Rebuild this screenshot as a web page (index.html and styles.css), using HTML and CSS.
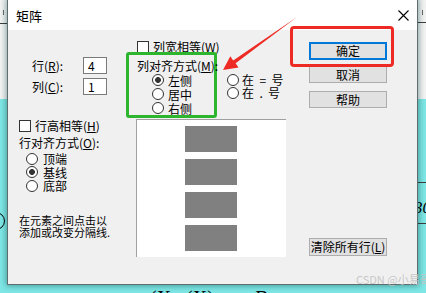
FILE: index.html
```html
<!DOCTYPE html>
<html lang="zh">
<head>
    <meta charset="UTF-8">
    <title>矩阵</title>
    <link rel="stylesheet" href="styles.css">
</head>
<body>
<div class="desktop">
    <!-- bits of the document behind the dialog -->
    <span class="rule rule-left"></span>
    <span class="tick tick-left"></span>
    <span class="tick tick-right"></span>
    <span class="rule rule-right-top"></span>
    <span class="rule rule-right-a"></span>
    <span class="rule rule-right-b"></span>
    <span class="behind-digits">30</span>
    <span class="behind-paren"></span>
    <span class="behind-formula">(X . (X) &#8801;&nbsp;&nbsp;&nbsp;&nbsp; &#914;</span>

    <div class="dialog">
        <div class="titlebar">
            <span class="title">矩阵</span>
            <svg class="close" width="11" height="11" viewBox="0 0 11 11">
                <path d="M0.5 0.5 L10.5 10.5 M10.5 0.5 L0.5 10.5" stroke="#000" stroke-width="1.1" fill="none"/>
            </svg>
        </div>

        <div class="client">
            <div class="col-left">
                <div class="fields">
                    <div class="field-row">
                        <label>行(<u>R</u>):</label>
                        <span class="num-box">4</span>
                    </div>
                    <div class="field-row">
                        <label>列(<u>C</u>):</label>
                        <span class="num-box">1</span>
                    </div>
                </div>

                <div class="check-row row-equal">
                    <span class="checkbox"></span>
                    <span>行高相等(<u>H</u>)</span>
                </div>

                <div class="group-label">行对齐方式(<u>O</u>):</div>
                <div class="radio-list row-align">
                    <div class="radio-row"><span class="radio"></span>顶端</div>
                    <div class="radio-row"><span class="radio checked"></span>基线</div>
                    <div class="radio-row"><span class="radio"></span>底部</div>
                </div>

                <p class="hint">在元素之间点击以<br>添加或改变分隔线.</p>
            </div>

            <div class="col-mid">
                <div class="check-row col-equal">
                    <span class="checkbox"></span>
                    <span>列宽相等(<u>W</u>)</span>
                </div>

                <div class="align-row">
                    <div class="col-align">
                        <div class="group-title">列对齐方式(<u>M</u>):</div>
                        <div class="radio-list">
                            <div class="radio-row tall"><span class="radio checked"></span>左侧</div>
                            <div class="radio-row tall"><span class="radio"></span>居中</div>
                            <div class="radio-row tall"><span class="radio"></span>右侧</div>
                        </div>
                    </div>
                    <div class="sign-radios">
                        <div class="radio-row sign"><span class="radio"></span>在&nbsp; =&nbsp; 号</div>
                        <div class="radio-row sign"><span class="radio"></span>在&nbsp; .&nbsp; 号</div>
                    </div>
                </div>

                <div class="preview">
                    <div class="cell"></div>
                    <div class="cell"></div>
                    <div class="cell"></div>
                    <div class="cell"></div>
                </div>
            </div>

            <div class="col-right">
                <button class="btn btn-default">确定</button>
                <button class="btn btn-cancel">取消</button>
                <button class="btn btn-help">帮助</button>
                <button class="btn btn-clear">清除所有行(<u>L</u>)</button>
            </div>
        </div>
    </div>

    <!-- red annotation drawn on top of the screenshot -->
    <div class="callout"></div>
    <svg class="arrow" width="426" height="293" viewBox="0 0 426 293">
        <polygon points="297,17 235.6,63.3 238.5,67.6 223,70 230.3,56.2 233.2,60.5" fill="#ee2a24"/>
    </svg>

    <div class="watermark">CSDN @小易哥</div>
</div>
</body>
</html>
```

FILE: styles.css
```css
* {
    box-sizing: border-box;
}
body {
    margin: 0;
    font-family: "Noto Sans CJK SC", "Liberation Sans", sans-serif;
    font-size: 12px;
    color: #000;
}
.desktop {
    position: relative;
    width: 426px;
    height: 293px;
    overflow: hidden;
    background: linear-gradient(to bottom, #f3f3f3 0, #f3f3f3 99px, #7ee7e6 99px);
}

/* things behind the dialog */
.rule {
    position: absolute;
    height: 1px;
    background: #3c3c3c;
}
.rule-left { left: 0; top: 23px; width: 7px; }
.rule-right-top { left: 418px; top: 22px; width: 8px; }
.rule-right-a { left: 418px; top: 182px; width: 8px; }
.rule-right-b { left: 418px; top: 223px; width: 8px; }
.tick {
    position: absolute;
    width: 1px;
    height: 5px;
    background: #666;
}
.tick-left { left: 3px; top: 10px; }
.tick-right { left: 422px; top: 10px; }
.behind-digits {
    position: absolute;
    left: 414px;
    top: 198px;
    font-family: "Liberation Serif", serif;
    font-style: italic;
    font-size: 17px;
    line-height: 20px;
}
.behind-paren {
    position: absolute;
    left: -13px;
    top: 212px;
    width: 18px;
    height: 18px;
    border: 1px solid #000;
    border-radius: 50%;
}
.behind-formula {
    position: absolute;
    left: 150px;
    top: 288px;
    font-family: "Liberation Serif", serif;
    font-size: 20px;
    line-height: 20px;
    white-space: nowrap;
}

/* dialog window */
.dialog {
    position: absolute;
    left: 7px;
    top: -1px;
    width: 411px;
    height: 286px;
    border: 1px solid #5e6e6e;
    background: #f0f0f0;
    box-shadow: 0 0 6px 1px rgba(0, 60, 60, 0.45);
    z-index: 1;
}
.titlebar {
    height: 30px;
    background: #fff;
    display: flex;
    align-items: center;
    padding: 0 8px 0 8px;
}
.title {
    font-size: 13px;
}
.close {
    margin-left: auto;
}
.client {
    height: 254px;
    display: grid;
    grid-template-columns: 118px 175px 1fr;
}

/* left column */
.col-left {
    padding: 27px 0 0 11px;
}
.fields {
    display: flex;
    flex-direction: column;
    gap: 4px;
}
.field-row {
    display: flex;
    align-items: center;
    height: 17px;
    line-height: 15px;
    padding-left: 13px;
}
.field-row label {
    width: 51px;
}
.num-box {
    width: 24px;
    height: 17px;
    border: 1px solid #7a7a7a;
    background: #fff;
    padding-left: 4px;
    line-height: 15px;
}
.check-row {
    display: flex;
    align-items: center;
    gap: 4px;
    height: 12px;
    line-height: 12px;
    white-space: nowrap;
}
.row-equal {
    margin-top: 24px;
    height: 13px;
}
.checkbox {
    width: 12px;
    height: 12px;
    border: 1px solid #333;
    background: #fff;
    flex: none;
}
.group-label {
    margin-top: 4px;
    line-height: 14px;
    white-space: nowrap;
}
.radio-list.row-align {
    margin-top: 2px;
    padding-left: 7px;
}
.radio-row {
    display: flex;
    align-items: center;
    gap: 5px;
    height: 13.5px;
    line-height: 13px;
    white-space: nowrap;
}
.radio-row.tall {
    height: 14px;
    gap: 4px;
}
.radio-row.sign {
    height: 12.5px;
    line-height: 12px;
    gap: 3px;
}
.radio {
    width: 12px;
    height: 12px;
    border: 1px solid #333;
    border-radius: 50%;
    background: #fff;
    flex: none;
}
.radio.checked {
    background: radial-gradient(circle, #333 0, #333 2.6px, #fff 3.2px);
}
.hint {
    margin: 21px 0 0;
    font-size: 11px;
    line-height: 12px;
}

/* middle column */
.col-mid {
    padding-top: 11px;
}
.col-equal {
    padding-left: 11px;
}
.align-row {
    display: flex;
    margin-top: -1px;
}
.col-align {
    width: 91px;
    height: 66px;
    border: 3px solid #2db52d;
    border-radius: 3px;
    padding: 4px 0 0 8px;
    white-space: nowrap;
}
.group-title {
    line-height: 14px;
}
.col-align .radio-list {
    padding-left: 15px;
}
.sign-radios {
    margin-left: 10px;
    padding-top: 22px;
}
.preview {
    margin: 1px 0 0 10px;
    width: 150px;
    height: 138px;
    background: #fff;
    border-left: 1px solid #a0a0a0;
    border-top: 1px solid #a0a0a0;
    padding: 6px 0 0 48px;
    display: flex;
    flex-direction: column;
    gap: 7px;
}
.cell {
    width: 52px;
    height: 26px;
    background: #808080;
}

/* right column */
.col-right {
    padding: 12px 0 0 8px;
    display: flex;
    flex-direction: column;
    align-items: flex-start;
}
.btn {
    width: 78px;
    height: 17px;
    border: 1px solid #adadad;
    background: #e1e1e1;
    font-family: inherit;
    font-size: 12px;
    color: #000;
    padding: 0;
    display: flex;
    align-items: center;
    justify-content: center;
    line-height: 1;
}
.btn-default {
    height: 18px;
    border: 2px solid #0078d7;
}
.btn-cancel {
    margin-top: 6px;
}
.btn-help {
    margin-top: 8px;
}
.btn-clear {
    margin-top: 130px;
    height: 18px;
}

/* annotations */
.callout {
    position: absolute;
    left: 290px;
    top: 26px;
    width: 104px;
    height: 41px;
    border: 3px solid #ee2a24;
    border-radius: 4px;
    z-index: 2;
}
.arrow {
    position: absolute;
    left: 0;
    top: 0;
    z-index: 2;
}
.watermark {
    position: absolute;
    left: 356px;
    top: 273px;
    font-size: 11px;
    line-height: 12px;
    color: rgba(195, 195, 195, 0.9);
    white-space: nowrap;
    z-index: 3;
}
```
